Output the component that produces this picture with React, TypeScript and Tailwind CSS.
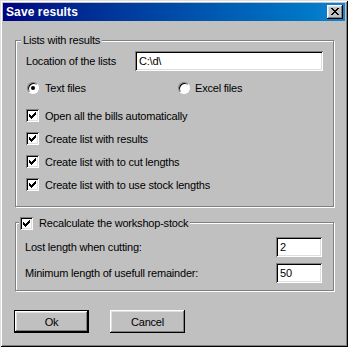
import React from "react";

const raised =
  "shadow-[inset_-1px_-1px_0_#000,inset_1px_1px_0_#fff,inset_-2px_-2px_0_#808080,inset_2px_2px_0_#dfdfdf]";
const sunken =
  "shadow-[inset_1px_1px_0_#808080,inset_-1px_-1px_0_#fff,inset_2px_2px_0_#000,inset_-2px_-2px_0_#dfdfdf]";

function CheckBox() {
  return (
    <div className={`w-[13px] h-[13px] shrink-0 bg-white flex items-center justify-center ${sunken}`}>
      <svg width="7" height="7" viewBox="0 0 7 7" shapeRendering="crispEdges">
        <path
          d="M0 2h1v3h-1zM1 3h1v3h-1zM2 4h1v3h-1zM3 3h1v3h-1zM4 2h1v3h-1zM5 1h1v3h-1zM6 0h1v3h-1z"
          fill="#000"
        />
      </svg>
    </div>
  );
}

function Radio({ checked }: { checked?: boolean }) {
  return (
    <div className="w-[12px] h-[12px] shrink-0 rounded-full bg-white border border-t-[#808080] border-l-[#808080] border-b-white border-r-white shadow-[inset_1px_1px_0_#000] flex items-center justify-center">
      {checked && <div className="w-[4px] h-[4px] rounded-full bg-black" />}
    </div>
  );
}

function CheckRow({ label }: { label: string }) {
  return (
    <div className="h-[23px] flex items-center pl-[10px] gap-[6px]">
      <CheckBox />
      <span>{label}</span>
    </div>
  );
}

export default function App() {
  return (
    <div className="w-[348px] h-[347px] bg-[#c0c0c0] p-[3px] text-black text-[11px] tracking-[-0.2px] leading-[14px] font-['Liberation_Sans',Arial,sans-serif] shadow-[inset_1px_1px_0_#dfdfdf,inset_-1px_-1px_0_#000,inset_2px_2px_0_#fff,inset_-2px_-2px_0_#808080] flex flex-col">
      {/* Title bar */}
      <div className="h-[18px] flex items-center bg-gradient-to-r from-[#000080] to-[#1084d0]">
        <span className="pl-[3px] text-white font-bold text-[12px] tracking-[0.1px]">Save results</span>
        <div className={`ml-auto mr-[2px] w-[16px] h-[14px] bg-[#c0c0c0] flex items-center justify-center ${raised}`}>
          <svg width="8" height="7" viewBox="0 0 8 7" shapeRendering="crispEdges" className="-mt-[1px]">
            <path
              d="M0 0h2v1h-2zM6 0h2v1h-2zM1 1h2v1h-2zM5 1h2v1h-2zM2 2h4v1h-4zM3 3h2v1h-2zM2 4h4v1h-4zM1 5h2v1h-2zM5 5h2v1h-2zM0 6h2v1h-2zM6 6h2v1h-2z"
              fill="#000"
            />
          </svg>
        </div>
      </div>

      {/* Body */}
      <div className="flex flex-col pl-[12px]">
        {/* Group 1 */}
        <div className="mt-[19px] w-[319px] h-[167px] border border-[#808080] shadow-[inset_1px_1px_0_#fff,1px_1px_0_#fff] flex flex-col">
          <div className="-mt-[8px] ml-[5px] px-[2px] w-fit h-[14px] bg-[#c0c0c0]">Lists with results</div>
          <div className="mt-[4px] h-[20px] flex items-center pl-[10px] pr-[10px]">
            <span>Location of the lists</span>
            <div className={`ml-auto w-[188px] h-[20px] bg-white flex items-center pl-[4px] ${sunken}`}>C:\d\</div>
          </div>
          <div className="mt-[5px] h-[23px] flex items-center pl-[11px]">
            <div className="w-[151px] flex items-center gap-[6px]">
              <Radio checked />
              <span>Text files</span>
            </div>
            <div className="flex items-center gap-[5px]">
              <Radio />
              <span>Excel files</span>
            </div>
          </div>
          <div className="mt-[5px] flex flex-col">
            <CheckRow label="Open all the bills automatically" />
            <CheckRow label="Create list with results" />
            <CheckRow label="Create list with to cut lengths" />
            <CheckRow label="Create list with to use stock lengths" />
          </div>
        </div>

        {/* Group 2 */}
        <div className="mt-[15px] w-[319px] h-[69px] border border-[#808080] shadow-[inset_1px_1px_0_#fff,1px_1px_0_#fff] flex flex-col">
          <div className="-mt-[7px] ml-[3px] px-[1px] w-fit h-[14px] bg-[#c0c0c0] flex items-center gap-[6px]">
            <CheckBox />
            <span className="pr-[1px]">Recalculate the workshop-stock</span>
          </div>
          <div className="mt-[7px] h-[20px] flex items-center pl-[9px] pr-[11px]">
            <span>Lost length when cutting:</span>
            <div className={`ml-auto w-[46px] h-[20px] bg-white flex items-center pl-[4px] ${sunken}`}>2</div>
          </div>
          <div className="mt-[6px] h-[20px] flex items-center pl-[9px] pr-[11px]">
            <span>Minimum length of usefull remainder:</span>
            <div className={`ml-auto w-[46px] h-[20px] bg-white flex items-center pl-[4px] ${sunken}`}>50</div>
          </div>
        </div>

        {/* Buttons */}
        <div className="mt-[19px] flex gap-[21px] -ml-[1px]">
          <div className="w-[75px] h-[23px] border border-black">
            <div className={`w-full h-full bg-[#c0c0c0] flex items-center justify-center ${raised}`}>Ok</div>
          </div>
          <div className={`w-[75px] h-[23px] bg-[#c0c0c0] flex items-center justify-center ${raised}`}>Cancel</div>
        </div>
      </div>
    </div>
  );
}
